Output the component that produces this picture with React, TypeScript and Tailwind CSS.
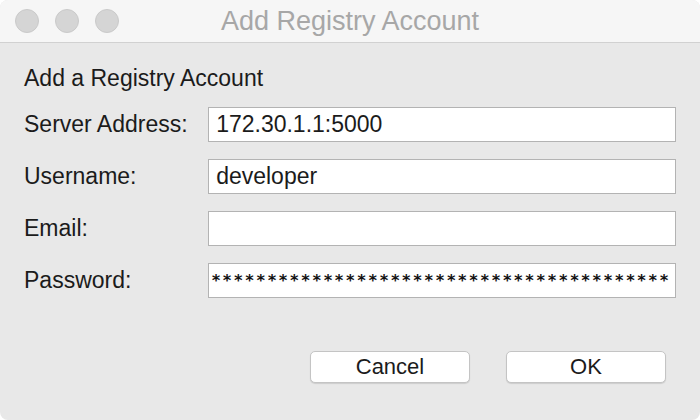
export default function App() {
  const rows = [
    { label: "Server Address:", value: "172.30.1.1:5000" },
    { label: "Username:", value: "developer" },
    { label: "Email:", value: "" },
  ];

  return (
    <div className="w-[700px] h-[420px] bg-white" style={{ fontFamily: "'Liberation Sans', Arial, sans-serif" }}>
      <div className="w-full h-full rounded-[8px] overflow-hidden bg-[#e8e8e8] flex flex-col">
        {/* title bar */}
        <div className="relative h-[43px] bg-[#f6f6f6] border-b border-[#d1d1d1] flex items-center justify-center shrink-0">
          <div className="absolute left-[15px] top-[9px] flex gap-[16px]">
            <span className="w-[24px] h-[24px] rounded-full bg-[#d5d5d5] border border-[#cacaca]" />
            <span className="w-[24px] h-[24px] rounded-full bg-[#d5d5d5] border border-[#cacaca]" />
            <span className="w-[24px] h-[24px] rounded-full bg-[#d5d5d5] border border-[#cacaca]" />
          </div>
          <span className="text-[27px] text-[#a7a7a7] leading-none">Add Registry Account</span>
        </div>

        {/* content */}
        <div className="flex flex-col px-[24px] pt-[24px]">
          <div className="text-[23px] text-[#1b1b1b] leading-none h-[23px]">Add a Registry Account</div>
          <div className="flex flex-col gap-[17px] mt-[17px]">
            {rows.map((r) => (
              <div key={r.label} className="flex items-center">
                <span className="w-[185px] text-[23px] leading-none text-[#1b1b1b]">{r.label}</span>
                <div className="w-[470px] h-[35px] bg-white border border-[#b3b3b3] flex items-center px-[7px] text-[23px] leading-none text-[#1b1b1b]">
                  {r.value}
                </div>
              </div>
            ))}
            <div className="flex items-center">
              <span className="w-[185px] text-[23px] leading-none text-[#1b1b1b]">Password:</span>
              <div
                className="w-[470px] h-[35px] bg-white border border-[#b3b3b3] flex items-center pl-[2px] text-[16px] font-bold text-[#111] overflow-hidden whitespace-nowrap tracking-[1.57px]"
                style={{ fontFamily: "'DejaVu Sans Mono', monospace" }}
              >
                {"*".repeat(41)}
              </div>
            </div>
          </div>

          <div className="flex justify-end gap-[36px] mt-[53px] pr-[10px]">
            <button className="w-[160px] h-[32px] bg-white rounded-[5px] border border-[#c4c4c4] shadow-[0_1px_1px_rgba(0,0,0,0.12)] text-[22px] leading-none text-[#1b1b1b]">
              Cancel
            </button>
            <button className="w-[160px] h-[32px] bg-white rounded-[5px] border border-[#c4c4c4] shadow-[0_1px_1px_rgba(0,0,0,0.12)] text-[22px] leading-none text-[#1b1b1b]">
              OK
            </button>
          </div>
        </div>
      </div>
    </div>
  );
}
